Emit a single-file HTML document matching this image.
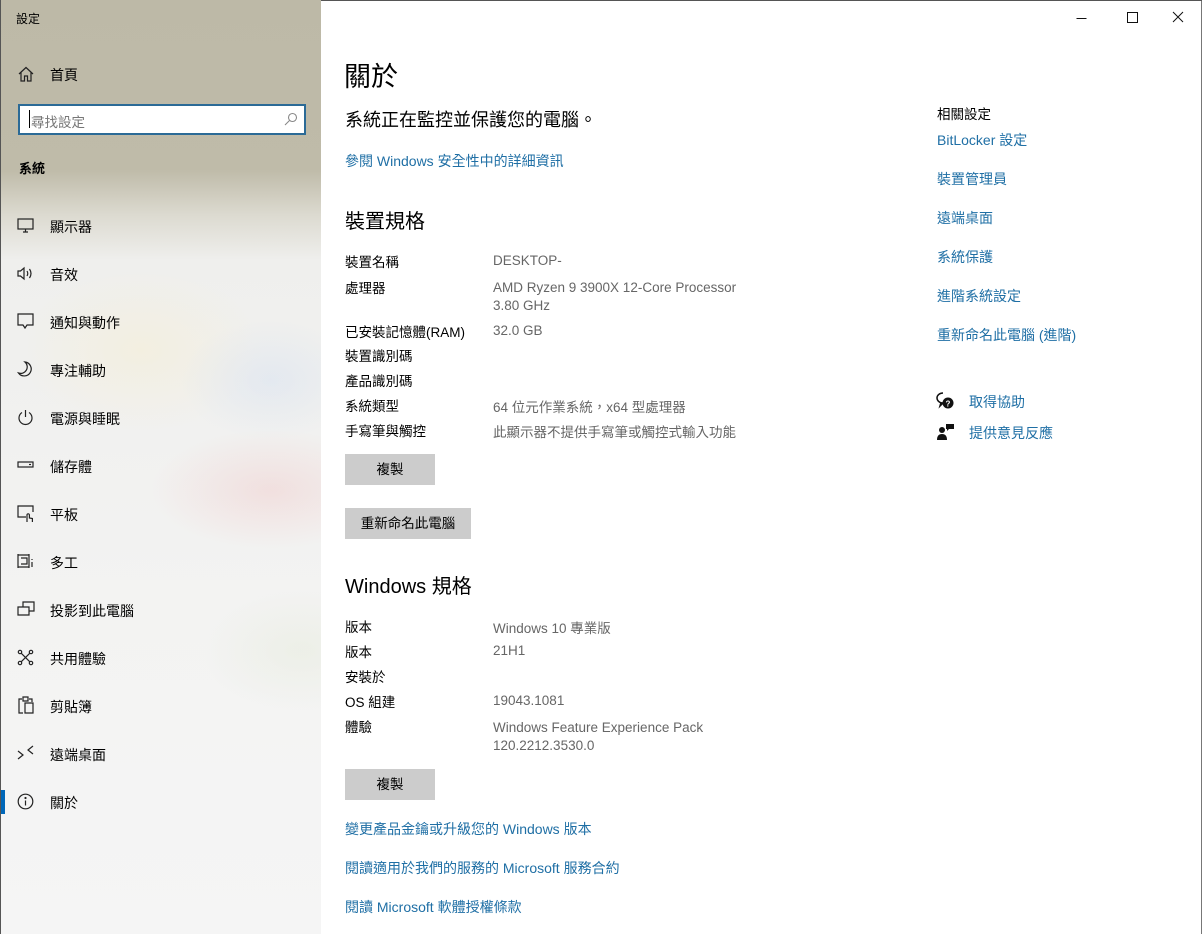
<!DOCTYPE html>
<html><head><meta charset="utf-8"><style>
*{margin:0;padding:0;box-sizing:border-box}
body{width:1202px;height:934px;overflow:hidden;background:#fff;font-family:"Liberation Sans","Noto Sans CJK TC",sans-serif;color:#000;position:relative}
.side{position:absolute;left:0;top:0;width:321px;height:934px;border-left:1px solid #555;
background:
radial-gradient(ellipse 90px 60px at 270px 380px,rgba(215,225,240,.5),transparent),
radial-gradient(ellipse 120px 60px at 270px 490px,rgba(240,205,205,.5),transparent),
radial-gradient(ellipse 120px 80px at 140px 350px,rgba(245,238,215,.6),transparent),
radial-gradient(ellipse 100px 60px at 300px 650px,rgba(230,235,220,.5),transparent),
linear-gradient(180deg,#bdb9a7 0px,#bfbba9 170px,#dcdad0 215px,#efefed 260px,#f3f3f2 600px,#f5f5f5 934px)}
.a{position:absolute;white-space:nowrap}
.nav{font-size:14px;left:49px}
.ic{position:absolute;left:16px}
.tb{font-size:12px}
.lnk{color:#1f6fa5;font-size:14px}
.lab{font-size:13.5px;left:345px}
.val{font-size:13.5px;left:493px;color:#666}
.btn{position:absolute;background:#ccc;font-size:13.5px;text-align:center;line-height:31px;height:31px}
</style></head><body>
<div class="side">
<div class="a tb" style="left:15px;top:10px">設定</div>
<svg class="ic" style="top:66px" width="18" height="16" viewBox="0 0 18 16" fill="none" stroke="#222" stroke-width="1.2"><path d="M2 8L9 1.5 16 8M4 6.5V15h3.5v-5h3v5H14V6.5"/></svg>
<div class="a nav" style="top:65px">首頁</div>
<div style="position:absolute;left:17px;top:104px;width:288px;height:31px;border:2px solid #2b6a96;background:#fff"></div>
<div class="a" style="left:28px;top:110px;width:1px;height:18px;background:#000"></div>
<div class="a" style="left:30px;top:111px;font-size:13.5px;color:#777">尋找設定</div>
<svg class="a" style="left:283px;top:112px" width="14" height="14" viewBox="0 0 14 14" fill="none" stroke="#888" stroke-width="1.1"><circle cx="8.5" cy="5.5" r="4"/><path d="M5.5 8.5L1 13"/></svg>
<div class="a" style="left:18px;top:158px;font-size:13px;font-weight:bold">系統</div>

<svg class="ic" style="top:218px" width="18" height="15" viewBox="0 0 18 15" fill="none" stroke="#222" stroke-width="1.2"><rect x="1" y="1" width="15" height="10"/><path d="M8.5 11v3M6 14h5"/></svg>
<div class="a nav" style="top:217px">顯示器</div>
<svg class="ic" style="top:266px" width="18" height="15" viewBox="0 0 18 15" fill="none" stroke="#222" stroke-width="1.2"><path d="M1 5h2.5l3.5-3v11l-3.5-3H1z"/><path d="M10 5q1.5 2.5 0 5M12.5 3q3 4.5 0 9"/></svg>
<div class="a nav" style="top:265px">音效</div>
<svg class="ic" style="top:313px" width="18" height="17" viewBox="0 0 18 17" fill="none" stroke="#222" stroke-width="1.2"><path d="M1 1h15v11H10l-2 3-2-3H1z"/></svg>
<div class="a nav" style="top:313px">通知與動作</div>
<svg class="ic" style="top:361px" width="18" height="17" viewBox="0 0 18 17" fill="none" stroke="#222" stroke-width="1.2"><path d="M8 1a7 7 0 1 1-6.5 11A6.5 6.5 0 0 0 8 1z"/></svg>
<div class="a nav" style="top:361px">專注輔助</div>
<svg class="ic" style="top:409px" width="18" height="17" viewBox="0 0 18 17" fill="none" stroke="#222" stroke-width="1.2"><path d="M5 3.5a6.5 6.5 0 1 0 7 0M8.5 1v7"/></svg>
<div class="a nav" style="top:409px">電源與睡眠</div>
<svg class="ic" style="top:460px" width="18" height="10" viewBox="0 0 18 10" fill="none" stroke="#222" stroke-width="1.2"><rect x="1" y="2" width="15" height="5"/><path d="M12 4.5h2"/></svg>
<div class="a nav" style="top:457px">儲存體</div>
<svg class="ic" style="top:505px" width="18" height="18" viewBox="0 0 18 18" fill="none" stroke="#222" stroke-width="1.2"><path d="M9 12H1V1h15v6"/><path d="M10 17v-7a1.2 1.2 0 0 1 2.4 0v3l3 .5v3.5"/></svg>
<div class="a nav" style="top:505px">平板</div>
<svg class="ic" style="top:553px" width="18" height="16" viewBox="0 0 18 16" fill="none" stroke="#222" stroke-width="1.2"><path d="M1 1v14M1 2h11M1 14h11M12 1v14M4 5h6v6H4"/><path d="M15 6v1M15 9v5"/></svg>
<div class="a nav" style="top:553px">多工</div>
<svg class="ic" style="top:601px" width="18" height="16" viewBox="0 0 18 16" fill="none" stroke="#222" stroke-width="1.2"><path d="M6 6V1h11v9h-5M1 6h11v8H1zM1 14h11"/></svg>
<div class="a nav" style="top:601px">投影到此電腦</div>
<svg class="ic" style="top:649px" width="18" height="17" viewBox="0 0 18 17" fill="none" stroke="#222" stroke-width="1.2"><circle cx="3" cy="3" r="1.7"/><circle cx="14" cy="3" r="1.7"/><circle cx="3" cy="14" r="1.7"/><circle cx="14" cy="14" r="1.7"/><path d="M4.3 4.3l8.4 8.4M12.7 4.3l-8.4 8.4"/></svg>
<div class="a nav" style="top:649px">共用體驗</div>
<svg class="ic" style="top:696px" width="18" height="18" viewBox="0 0 18 18" fill="none" stroke="#222" stroke-width="1.2"><path d="M5 3H2v14h4M12 3h3v3M6 1h5v4H6zM8 7h8v10H8z"/></svg>
<div class="a nav" style="top:697px">剪貼簿</div>
<svg class="ic" style="top:745px" width="18" height="17" viewBox="0 0 18 17" fill="none" stroke="#222" stroke-width="1.2"><path d="M1 6l5 4-5 4M16 1l-5 4 5 4"/></svg>
<div class="a nav" style="top:745px">遠端桌面</div>
<div class="a" style="left:0;top:790px;width:4px;height:24px;background:#0067b8"></div>
<svg class="ic" style="top:793px" width="18" height="18" viewBox="0 0 18 18" fill="none" stroke="#222" stroke-width="1.2"><circle cx="8.5" cy="8.5" r="7.3"/><path d="M8.5 7.5v5"/><circle cx="8.5" cy="5" r=".5" fill="#222"/></svg>
<div class="a nav" style="top:793px">關於</div>
</div>

<div style="position:absolute;right:0;top:0;width:1px;height:934px;background:#777"></div>
<div style="position:absolute;left:321px;top:0;right:0;height:1px;background:#555"></div>
<svg class="a" style="left:1070px;top:8px" width="120" height="20" viewBox="0 0 120 20" fill="none" stroke="#111" stroke-width="1"><path d="M6.5 10.5h10"/><rect x="57.5" y="4.5" width="10" height="10"/><path d="M103 4l10 10M113 4l-10 10"/></svg>

<div class="a" style="left:344px;top:55px;font-size:27px">關於</div>
<div class="a" style="left:345px;top:106px;font-size:18px">系統正在監控並保護您的電腦。</div>
<div class="a lnk" style="left:345px;top:151px">參閱 Windows 安全性中的詳細資訊</div>
<div class="a" style="left:345px;top:205px;font-size:20px">裝置規格</div>

<div class="a lab" style="top:251px">裝置名稱</div><div class="a val" style="top:253px">DESKTOP-</div>
<div class="a lab" style="top:277px">處理器</div><div class="a val" style="top:279px;line-height:18px">AMD Ryzen 9 3900X 12-Core Processor<br>3.80 GHz</div>
<div class="a lab" style="top:321px">已安裝記憶體(RAM)</div><div class="a val" style="top:323px">32.0 GB</div>
<div class="a lab" style="top:345px">裝置識別碼</div>
<div class="a lab" style="top:370px">產品識別碼</div>
<div class="a lab" style="top:395px">系統類型</div><div class="a val" style="top:396px">64 位元作業系統，x64 型處理器</div>
<div class="a lab" style="top:420px">手寫筆與觸控</div><div class="a val" style="top:421px">此顯示器不提供手寫筆或觸控式輸入功能</div>
<div class="btn" style="left:345px;top:454px;width:90px">複製</div>
<div class="btn" style="left:345px;top:508px;width:126px">重新命名此電腦</div>

<div class="a" style="left:345px;top:570px;font-size:20px">Windows 規格</div>
<div class="a lab" style="top:616px">版本</div><div class="a val" style="top:617px">Windows 10 專業版</div>
<div class="a lab" style="top:641px">版本</div><div class="a val" style="top:643px">21H1</div>
<div class="a lab" style="top:666px">安裝於</div>
<div class="a lab" style="top:691px">OS 組建</div><div class="a val" style="top:693px">19043.1081</div>
<div class="a lab" style="top:716px">體驗</div><div class="a val" style="top:719px;line-height:18px">Windows Feature Experience Pack<br>120.2212.3530.0</div>
<div class="btn" style="left:345px;top:769px;width:90px">複製</div>
<div class="a lnk" style="left:345px;top:819px">變更產品金鑰或升級您的 Windows 版本</div>
<div class="a lnk" style="left:345px;top:858px">閱讀適用於我們的服務的 Microsoft 服務合約</div>
<div class="a lnk" style="left:345px;top:897px">閱讀 Microsoft 軟體授權條款</div>

<div class="a" style="left:937px;top:103px;font-size:13.5px">相關設定</div>
<div class="a lnk" style="left:937px;top:130px">BitLocker 設定</div>
<div class="a lnk" style="left:937px;top:169px">裝置管理員</div>
<div class="a lnk" style="left:937px;top:208px">遠端桌面</div>
<div class="a lnk" style="left:937px;top:247px">系統保護</div>
<div class="a lnk" style="left:937px;top:286px">進階系統設定</div>
<div class="a lnk" style="left:937px;top:325px">重新命名此電腦 (進階)</div>
<svg class="a" style="left:936px;top:392px" width="20" height="18" viewBox="0 0 20 18"><path d="M7 1a6 5 0 1 0 0 10l-3 3 1-3.5" fill="none" stroke="#111" stroke-width="1.5"/><circle cx="12" cy="11" r="5.5" fill="#111"/><text x="12" y="14.5" font-size="8" fill="#fff" text-anchor="middle" font-family="Liberation Sans" font-weight="bold">?</text></svg>
<div class="a lnk" style="left:969px;top:392px">取得協助</div>
<svg class="a" style="left:937px;top:423px" width="18" height="18" viewBox="0 0 18 18" fill="#111"><circle cx="5" cy="7" r="3"/><path d="M0 17q0-6 5-6t5 6z"/><path d="M9 1h8v5h-5l-2 2V6H9z"/></svg>
<div class="a lnk" style="left:969px;top:423px">提供意見反應</div>
</body></html>
